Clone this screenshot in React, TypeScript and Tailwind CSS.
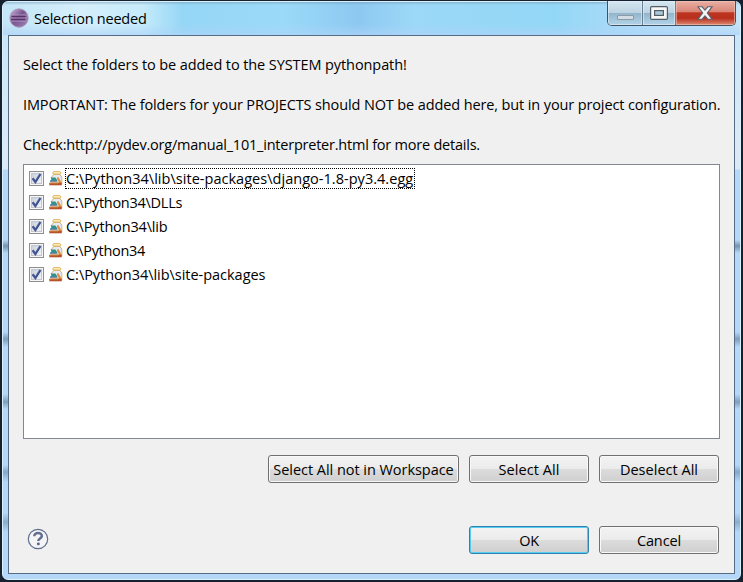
import type { ReactNode } from "react";

const folders = [
  { path: "C:\\Python34\\lib\\site-packages\\django-1.8-py3.4.egg", track: "tracking-[0.03px]" },
  { path: "C:\\Python34\\DLLs", track: "tracking-[-0.27px]" },
  { path: "C:\\Python34\\lib", track: "tracking-[-0.17px]" },
  { path: "C:\\Python34", track: "tracking-[-0.33px]" },
  { path: "C:\\Python34\\lib\\site-packages", track: "tracking-[-0.03px]" },
];

function EclipseIcon() {
  return (
    <svg width="20" height="20" viewBox="0 0 20 20" className="-mt-[2px] shrink-0">
      <defs>
        <linearGradient id="ecl" x1="0" y1="0" x2="1" y2="1">
          <stop offset="0" stopColor="#d3bfdc" />
          <stop offset="0.45" stopColor="#785591" />
          <stop offset="1" stopColor="#a185b4" />
        </linearGradient>
      </defs>
      <circle cx="10" cy="10" r="9.2" fill="url(#ecl)" stroke="#a997b8" strokeWidth="0.9" />
      <path d="M2.2 7h15.6M1.5 10h17M2.2 13h15.6" stroke="#b79cc6" strokeWidth="0.9" />
      <path d="M2.5 8.5h14M2 11.5h14.5" stroke="#573468" strokeWidth="1.3" />
    </svg>
  );
}

function Checkbox() {
  return (
    <svg width="15" height="15" viewBox="0 0 15 15" className="shrink-0">
      <defs>
        <linearGradient id="chk" x1="0" y1="0" x2="1" y2="1">
          <stop offset="0" stopColor="#c9ced8" />
          <stop offset="1" stopColor="#f4f5f7" />
        </linearGradient>
      </defs>
      <rect x="0.5" y="0.5" width="14" height="14" fill="#f6f6f6" stroke="#8e8f8f" />
      <rect x="2.5" y="2.5" width="10" height="10" fill="url(#chk)" stroke="#c3c7cf" />
      <path d="M3.6 7.2 6.4 11 11.4 3" fill="none" stroke="#435694" strokeWidth="2.3" />
    </svg>
  );
}

function JarIcon() {
  return (
    <svg width="14" height="15" viewBox="0 0 14 15" className="shrink-0">
      <path d="M5 3.2 2.6 6v7.3h10.2V6L10.6 3.2z" fill="#e3ebf8" stroke="#d8aa62" strokeWidth="0.9" />
      <rect x="3.9" y="0.7" width="7.8" height="2.4" rx="1" fill="#fff6cf" stroke="#d8a443" strokeWidth="0.9" />
      <path d="m7.6 7 1.9-1.1 3.2 6.1-2 1.2z" fill="#e0903c" />
      <path d="M1.6 6.5h4.8l1.8 2.8H2.8z" fill="#2f9488" />
      <path d="M1.2 9.2h7v1.7h-7z" fill="#2e6f92" />
      <path d="M1.8 10.7h8v1.2h-8z" fill="#e9d6a8" />
      <path d="M0.3 11.7h12.4v2.6H0.3z" fill="#b25528" />
      <path d="M1 12.1h8.5" stroke="#dd9156" strokeWidth="0.7" />
    </svg>
  );
}

function DialogButton({ children, track, wide, primary }: { children: ReactNode; track: string; wide?: boolean; primary?: boolean }) {
  return (
    <button
      className={`flex h-7 items-center justify-center whitespace-nowrap rounded-[3px] border bg-[linear-gradient(#f3f3f3_0%,#ebebeb_49%,#dcdcdc_50%,#cfcfcf_100%)] pt-px ${track} ${
        wide ? "w-[191px]" : "w-[120px]"
      } ${primary ? "border-[#3281ac] shadow-[inset_0_0_0_1px_#55cdf3]" : "border-[#707070] shadow-[inset_0_0_0_1px_#f9f9f9]"}`}
    >
      {children}
    </button>
  );
}

export default function App() {
  return (
    <div className="h-[582px] w-[743px] overflow-hidden bg-[#17202e] font-['Open_Sans','Noto_Sans',sans-serif] text-[14.5px] leading-5 text-black">
      <div className="h-full w-full pb-[2px] pl-[2px] pr-[2px] pt-[1px]">
        <div className="flex h-full flex-col rounded-[6px] border border-[#d8f1fd] bg-[linear-gradient(#bfe4f8_0px,#d2e8f8_80px,#dce9f5_147px,#dce9f6_167px,#b5d7f8_168px,#b5d7f8_238px,#7792ad_244px,#b5d7f8_251px,#b5d7f8_330px,#7f9ebc_337px,#b5d7f8_345px,#b5d7f8_392px,#7f9ebc_400px,#b5d7f8_407px,#b5d7f8_463px,#86a8c8_470px,#b5d7f8_480px,#b5d7f8_511px,#8bacca_520px,#b5d7f8_530px,#b5d7f8_100%)] px-[5px]">
          <header className="-mx-[5px] flex h-[33px] shrink-0 justify-between rounded-t-[5px] bg-[linear-gradient(#7397b080_0px,transparent_3px,transparent_22px,#add3f8b0_33px),linear-gradient(90deg,#c3e5f7_0px,#d5effb_80px,#c5ebfb_140px,#96d6f6_180px,#9bdaf8_280px,#8dc8f1_355px,#9cd8f7_410px,#93d7f6_550px,#b0dcf8_640px,#c5e3f8_739px)] pl-[6px] pr-[4px]">
            <div className="flex items-center gap-[5px] pt-px">
              <EclipseIcon />
              <span className="tracking-[-0.22px]">Selection needed</span>
            </div>
            <div className="-mt-px flex h-[25px] w-[129px] overflow-hidden rounded-b-[5px] border border-t-0 border-[#44525f]">
              <div className="flex w-[35px] items-center justify-center border-r border-[#687f91] bg-[linear-gradient(#d4e6f1_0%,#bdd3e2_48%,#92b4cb_50%,#b3d4e7_100%)] pt-[8px] shadow-[inset_0_0_0_1px_#e5f3fb90]">
                <div className="h-[5px] w-[17px] rounded-[1px] border border-[#8a9aa6] bg-[#d3dce2]" />
              </div>
              <div className="flex w-[33px] items-center justify-center border-r border-[#687f91] bg-[linear-gradient(#d4e6f1_0%,#bdd3e2_48%,#92b4cb_50%,#b3d4e7_100%)] pr-px shadow-[inset_0_0_0_1px_#e5f3fb90]">
                <svg width="18" height="14" viewBox="0 0 18 14">
                  <rect x="0.6" y="0.6" width="16.8" height="12.8" rx="1.2" fill="#f6f6f6" stroke="#535d68" strokeWidth="1.2" />
                  <rect x="4.6" y="4.6" width="8.8" height="4.8" fill="#a9c8da" stroke="#535d68" strokeWidth="1.2" />
                </svg>
              </div>
              <div className="flex flex-1 items-center justify-center bg-[linear-gradient(#e9afa5_0%,#d98677_45%,#bd3520_49%,#b92f1d_72%,#dd8b72_100%)] pr-px shadow-[inset_0_0_0_1px_#f3c6bc90]">
                <svg width="16" height="14" viewBox="0 0 16 14">
                  <path d="M1 .8h4.2L8 4.1 10.8.8H15L10.3 7 15 13.2h-4.2L8 9.9l-2.8 3.3H1L5.7 7z" fill="#f4f4f5" stroke="#58606d" strokeWidth="1.1" />
                </svg>
              </div>
            </div>
          </header>
          <main className="flex h-[539px] w-[727px] shrink-0 flex-col border border-[#566b84] bg-[#f0f0f0] pl-[14px] pr-[14px] pt-[19px]">
            <p className="h-10 whitespace-nowrap tracking-[-0.09px]">Select the folders to be added to the SYSTEM pythonpath!</p>
            <p className="h-10 whitespace-nowrap tracking-[-0.12px]">IMPORTANT: The folders for your PROJECTS should NOT be added here, but in your project configuration.</p>
            <p className="h-[29px] whitespace-nowrap tracking-[-0.22px]">Check:http://pydev.org/manual_101_interpreter.html for more details.</p>
            <ul className="h-[275px] w-[697px] border border-[#828790] bg-white pl-[5px] pt-[2px]">
              {folders.map((folder, i) => (
                <li key={folder.path} className="flex h-6 items-start">
                  <span className="mt-1 flex"><Checkbox /></span>
                  <span className="ml-[5px] mt-1 flex"><JarIcon /></span>
                  <span className={`ml-[2px] mt-px h-[21px] whitespace-nowrap border border-dotted pr-px ${folder.track} ${i === 0 ? "border-black" : "border-transparent"}`}>
                    {folder.path}
                  </span>
                </li>
              ))}
            </ul>
            <div className="mr-px mt-4 flex justify-end gap-[10px]">
              <DialogButton wide track="tracking-[-0.04px]">Select All not in Workspace</DialogButton>
              <DialogButton track="tracking-[0.08px]">Select All</DialogButton>
              <DialogButton track="tracking-[0.02px]">Deselect All</DialogButton>
            </div>
            <div className="mr-px mt-[43px] flex items-center justify-between">
              <svg width="22" height="22" viewBox="0 0 22 22" className="-mt-[2px] ml-[4px]">
                <circle cx="11" cy="11" r="9.7" fill="#f5f5f7" stroke="#61708f" strokeWidth="1.2" />
                <path d="M7.3 8.2C7.3 3.9 15 4.1 14.8 8.1c-.1 2.4-3.5 2.3-3.5 4.9" fill="none" stroke="#61708f" strokeWidth="2.5" />
                <rect x="9.9" y="14.6" width="2.9" height="2.7" rx="1" fill="#61708f" />
              </svg>
              <div className="flex gap-[10px]">
                <DialogButton primary track="tracking-[-0.3px]">OK</DialogButton>
                <DialogButton track="tracking-[-0.1px]">Cancel</DialogButton>
              </div>
            </div>
          </main>
        </div>
      </div>
    </div>
  );
}
